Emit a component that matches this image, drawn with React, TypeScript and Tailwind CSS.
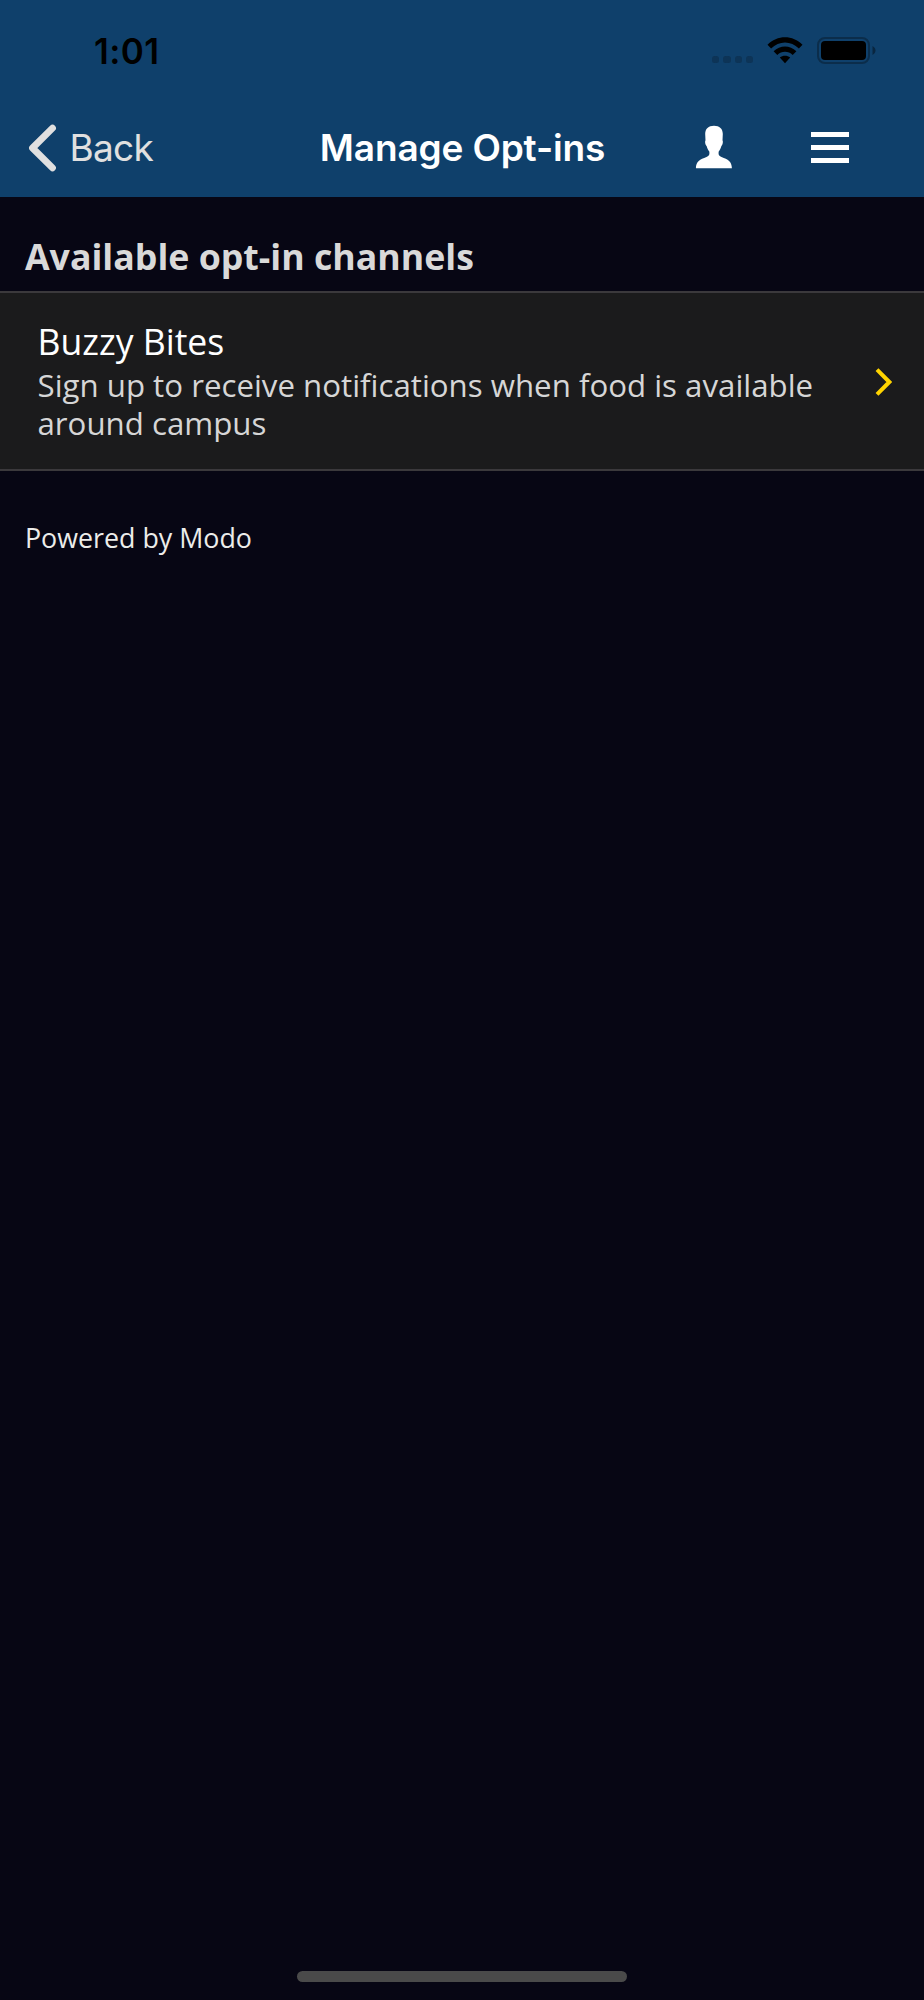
function StatusBar() {
  return (
    <div className="flex h-[101px] items-center justify-between pl-[94px] pr-[48px] text-black">
      <span className="text-[35px] leading-[40px] font-semibold tracking-[0.4px]">1:01</span>
      <div className="flex items-center">
        <div className="mt-[18px] mr-[14px] flex gap-[4px]">
          {[0, 1, 2, 3].map((dot) => (
            <span key={dot} className="size-[7.200px] rounded-[2.5px] bg-[#0d3457]" />
          ))}
        </div>
        <svg className="mr-[13px] h-[27px] w-[36px]" viewBox="0 0 36 27" aria-hidden="true">
          <path d="M.5 7.8C10-2.2 26-2.2 35.500 7.800L31.900 11.600C24 3.600 12 3.600 4.100 11.600Z" />
          <path d="M6.600 14.200C13 7.800 23 7.800 29.400 14.200L25.700 17.900C21.400 13.700 14.600 13.700 10.300 17.900Z" />
          <path d="M12.800 20.500C15.800 18 20.200 18 23.200 20.500L18 26.200Z" />
        </svg>
        <svg className="h-[28px] w-[60px]" viewBox="0 0 60 28" aria-hidden="true">
          <rect x="2" y="1" width="51" height="25" rx="7" fill="none" stroke="#0b2d4b" strokeWidth="2" />
          <rect x="5" y="4" width="45" height="19" rx="4" />
          <path d="M56.500 9C60.500 11 60.500 16 56.500 18Z" fill="#092640" />
        </svg>
      </div>
    </div>
  );
}

function NavBar() {
  return (
    <div className="grid h-[96px] grid-cols-[310px_305px_1fr] items-center pb-[3px] text-[37px] leading-[48px]">
      <button className="flex items-center pl-[28px] text-[#e0e0e0]">
        <svg className="mr-[12.500px] h-[48px] w-[29px]" viewBox="0 0 29 48" fill="none" aria-hidden="true">
          <path d="M24.500 4.200L4.500 24L24.500 43.800" stroke="currentColor" strokeWidth="6.800" strokeLinecap="round" strokeLinejoin="round" />
        </svg>
        <span className="tracking-[-0.7px]">Back</span>
      </button>
      <h1 className="text-center font-semibold tracking-[-0.150px] whitespace-nowrap text-white">Manage Opt-ins</h1>
      <div className="flex items-center pb-[1px] pl-[80px] text-white">
        <button aria-label="Profile">
          <svg className="h-[44px] w-[38px]" viewBox="0 0 38 44" fill="currentColor" aria-hidden="true">
            <path d="M19 .8C24.500.8 27.800 3.900 27.800 9L27.500 15.600C28.300 16 27.800 20.300 26.400 20.900C25.700 23.700 24.700 25 23.700 26.500C23.300 29.500 23.800 30.700 26.500 32C33 34.400 36.800 36.500 36.900 43.200H.9C1 36.500 5 34.400 11.500 32C14.200 30.700 14.700 29.500 14.300 26.500C13.300 25 12.300 23.700 11.600 20.900C10.200 20.300 9.700 16 10.500 15.600L10.200 9C10.200 3.900 13.500.8 19 .8Z" />
          </svg>
        </button>
        <button aria-label="Menu" className="mt-[1px] ml-[78px] flex w-[38px] flex-col gap-[8px]">
          <span className="h-[5px] bg-white" />
          <span className="h-[5px] bg-white" />
          <span className="h-[5px] bg-white" />
        </button>
      </div>
    </div>
  );
}

export default function App() {
  return (
    <div className="flex h-[2000px] w-[924px] flex-col overflow-hidden bg-[#070614] font-['Open_Sans',sans-serif]">
      <header className="h-[197px] bg-[#0f406b] font-['Inter',sans-serif]">
        <StatusBar />
        <NavBar />
      </header>
      <main className="flex-1">
        <h2 className="pt-[35px] pb-[11px] pl-[25px] text-[35.700px] leading-[48px] font-bold text-[#d9d9d9]">
          Available opt-in channels
        </h2>
        <a className="flex items-center border-y-2 border-[#3b393c] bg-[#1b1b1c] pt-[28px] pb-[27px] pr-[32px] pl-[37.500px]">
          <div className="flex-1">
            <div className="text-[35.600px] leading-[40px] text-white">Buzzy Bites</div>
            <p className="mt-[5px] text-[31.240px] leading-[38px] text-[#d6d6d6]">
              Sign up to receive notifications when food is available
              <br />
              around campus
            </p>
          </div>
          <svg className="h-[30px] w-[18px]" viewBox="0 0 18 30" fill="none" aria-hidden="true">
            <path d="M3 2.700L15.300 15L3 27.300" stroke="#ffd400" strokeWidth="4" />
          </svg>
        </a>
        <p className="mt-[49px] pl-[25px] text-[26.800px] leading-[36px] text-[#ececea]">Powered by Modo</p>
      </main>
      <div className="mx-auto mb-[18px] h-[11px] w-[330px] rounded-full bg-[#4a4a4a]" />
    </div>
  );
}
